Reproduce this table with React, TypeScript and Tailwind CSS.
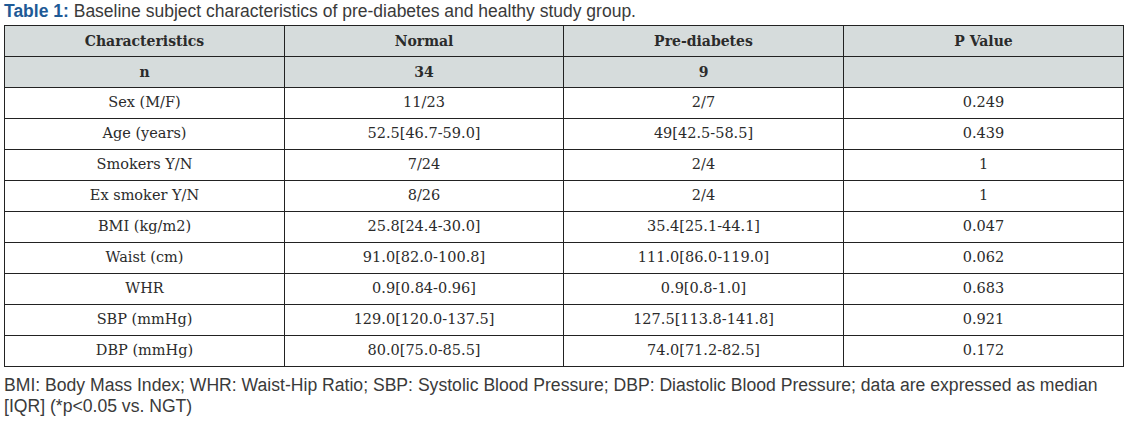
import React from "react";

const rows: [string, string, string, string][] = [
  ["Sex (M/F)", "11/23", "2/7", "0.249"],
  ["Age (years)", "52.5[46.7-59.0]", "49[42.5-58.5]", "0.439"],
  ["Smokers Y/N", "7/24", "2/4", "1"],
  ["Ex smoker Y/N", "8/26", "2/4", "1"],
  ["BMI (kg/m2)", "25.8[24.4-30.0]", "35.4[25.1-44.1]", "0.047"],
  ["Waist (cm)", "91.0[82.0-100.8]", "111.0[86.0-119.0]", "0.062"],
  ["WHR", "0.9[0.84-0.96]", "0.9[0.8-1.0]", "0.683"],
  ["SBP (mmHg)", "129.0[120.0-137.5]", "127.5[113.8-141.8]", "0.921"],
  ["DBP (mmHg)", "80.0[75.0-85.5]", "74.0[71.2-82.5]", "0.172"],
];

export default function App() {
  return (
    <div className="w-[1127px] h-[422px] bg-white pl-[4px] pr-[4px]">
      <div className="pt-[1px] h-[25px] text-[17.5px] leading-[20px] text-[#3a3a3a] font-['Liberation_Sans',Arial,sans-serif] whitespace-nowrap">
        <span className="font-bold text-[#1e5a96]">Table 1:</span> Baseline subject characteristics of pre-diabetes and healthy study group.
      </div>
      <table className="w-[1119px] table-fixed border-collapse font-['DejaVu_Serif',serif] text-[14.5px] text-[#2b2b2b]">
        <colgroup>
          <col className="w-[280px]" />
          <col className="w-[279px]" />
          <col className="w-[280px]" />
          <col className="w-[280px]" />
        </colgroup>
        <tbody>
          <tr className="h-[31px] bg-[#d6dcdc] font-bold text-[14px]">
            <td className="border border-[#222] text-center">Characteristics</td>
            <td className="border border-[#222] text-center">Normal</td>
            <td className="border border-[#222] text-center">Pre-diabetes</td>
            <td className="border border-[#222] text-center">P Value</td>
          </tr>
          <tr className="h-[31px] bg-[#d6dcdc] font-bold text-[14px]">
            <td className="border border-[#222] text-center">n</td>
            <td className="border border-[#222] text-center">34</td>
            <td className="border border-[#222] text-center">9</td>
            <td className="border border-[#222] text-center"></td>
          </tr>
          {rows.map((r) => (
            <tr key={r[0]} className="h-[31px]">
              {r.map((c, i) => (
                <td key={i} className="border border-[#222] text-center">
                  {c}
                </td>
              ))}
            </tr>
          ))}
        </tbody>
      </table>
      <div className="mt-[8px] text-[17.6px] leading-[21px] text-[#3a3a3a] font-['Liberation_Sans',Arial,sans-serif]">
        BMI: Body Mass Index; WHR: Waist-Hip Ratio; SBP: Systolic Blood Pressure; DBP: Diastolic Blood Pressure; data are expressed as median [IQR] (*p&lt;0.05 vs. NGT)
      </div>
    </div>
  );
}
